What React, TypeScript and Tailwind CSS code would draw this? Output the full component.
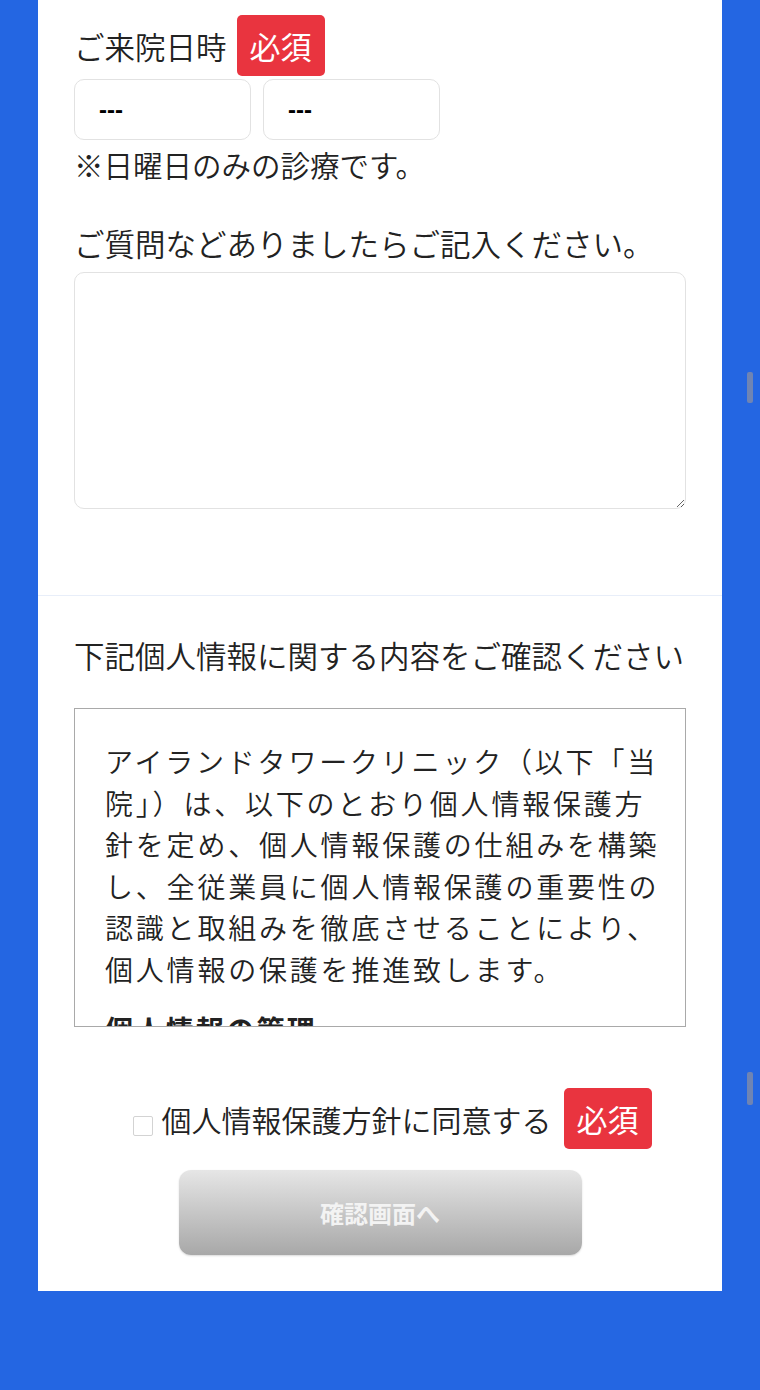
import React from "react";

const jpFont = "font-['Noto_Sans_CJK_JP','Noto_Sans',sans-serif]";

const policyLines = [
  "アイランドタワークリニック（以下「当",
  "院」）は、以下のとおり個人情報保護方",
  "針を定め、個人情報保護の仕組みを構築",
  "し、全従業員に個人情報保護の重要性の",
  "認識と取組みを徹底させることにより、",
  "個人情報の保護を推進致します。"
];

function RequiredBadge() {
  return (
    <span className="flex h-[61px] items-center rounded-[5px] bg-[#e9343f] px-[13px] text-[31px] font-normal leading-none text-white">
      必須
    </span>
  );
}

function TimeSelect() {
  return (
    <select
      className="h-[61px] w-[177px] appearance-none rounded-[10px] border border-[#e2e2e2] bg-white pl-[24px] font-['Liberation_Sans',sans-serif] text-[24px] font-semibold text-black"
      defaultValue=""
    >
      <option value="">---</option>
    </select>
  );
}

export default function App() {
  return (
    <div className={`relative min-h-[1390px] bg-[#2466e2] ${jpFont} font-[350] text-[#222]`}>
      <div className="mx-[38px] bg-white">
        <section className="border-b border-[#e8eef9] px-9 pt-[15px] pb-[86px]">
          <div className="flex items-center gap-[10px]">
            <span className="text-[30.5px] leading-[40px]">ご来院日時</span>
            <RequiredBadge />
          </div>
          <div className="mt-[3px] flex gap-3">
            <TimeSelect />
            <TimeSelect />
          </div>
          <p className="mt-[4px] text-[29.5px] leading-[40px]">※日曜日のみの診療です。</p>

          <p className="mt-[39px] text-[30.5px] leading-[40px]">ご質問などありましたらご記入ください。</p>
          <textarea className="mt-[9px] block h-[237px] w-full rounded-[10px] border border-[#e2e2e2] bg-white" />
        </section>

        <section className="px-9 pt-[39px] pb-9">
          <p className="text-[30.5px] leading-[40px]">下記個人情報に関する内容をご確認ください</p>

          <div className="mt-[33px] h-[319px] overflow-hidden border border-[#a9a9a9] pt-[32px] pr-[10px] pl-[30px]">
            <p className="text-[28px] leading-[41.6px] tracking-[2.8px]">
              {policyLines.map((line) => (
                <span key={line} className="block whitespace-nowrap">
                  {line}
                </span>
              ))}
            </p>
            <h3 className="mt-[18px] text-[28px] font-bold leading-[41.6px] tracking-[2.3px]">
              個人情報の管理
            </h3>
          </div>

          <label className="mt-[61px] flex items-center justify-center pl-6">
            <input
              className="mt-[14px] mr-[9px] h-[20px] w-[20px] appearance-none rounded-[2px] border border-[#d3d3d3] bg-white"
              type="checkbox"
            />
            <span className="mr-[12px] text-[30px] leading-[40px]">個人情報保護方針に同意する</span>
            <RequiredBadge />
          </label>

          <button
            className="mx-auto mt-[21px] flex h-[85px] w-[403px] items-center justify-center rounded-[12px] bg-linear-to-b from-[#e6e6e6] to-[#a8a8a8] text-[24px] font-bold text-[#f3f3f3] shadow-[0_1px_2px_rgba(0,0,0,0.15)]"
            disabled
            type="button"
          >
            確認画面へ
          </button>
        </section>
      </div>

      <div className="absolute top-[372px] left-[747px] h-[31px] w-[6px] rounded-[2px] bg-[#6f84b3]" />
      <div className="absolute top-[1072px] left-[747px] h-[33px] w-[6px] rounded-[2px] bg-[#6f84b3]" />
    </div>
  );
}
